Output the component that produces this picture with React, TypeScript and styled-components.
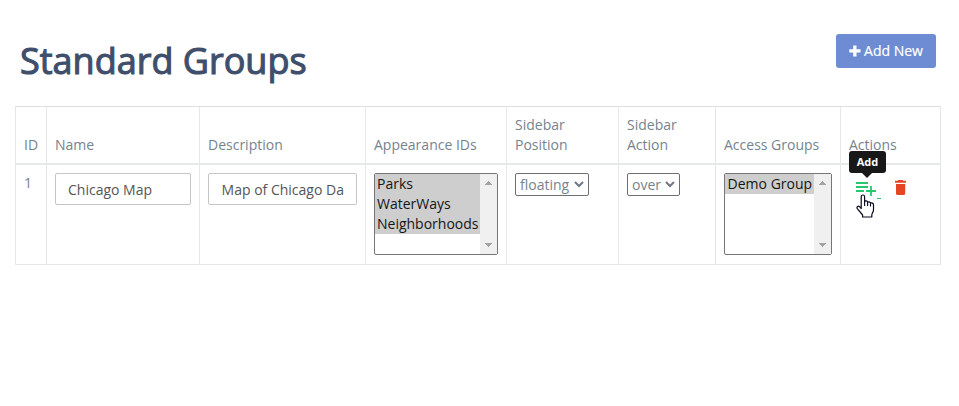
import React from "react";
import styled, { createGlobalStyle } from "styled-components";

const GlobalStyle = createGlobalStyle`
  * { box-sizing: border-box; }
  body {
    margin: 0;
    background: #fff;
    color: #76838f;
    font: 14px/20px "Open Sans", "Noto Sans", sans-serif;
  }
`;

const Page = styled.main`
  width: 959px;
  height: 406px;
  padding: 34px 18px 0 15px;
  overflow: hidden;
`;

const Header = styled.header`
  display: flex;
  justify-content: space-between;
  align-items: flex-start;
  height: 72px;
  padding: 0 5px;
`;

const Title = styled.h1`
  margin: 0;
  color: #3f4f6b;
  font-size: 36px;
  line-height: 54px;
  font-weight: 400;
  -webkit-text-stroke: 1.1px #3f4f6b;
  white-space: nowrap;
`;

const AddButton = styled.button`
  display: flex;
  align-items: center;
  justify-content: center;
  gap: 3px;
  width: 100px;
  height: 34px;
  padding: 0;
  border: 0;
  border-radius: 3px;
  background: #6e8cd3;
  color: #fff;
  font: inherit;
  -webkit-text-stroke: 0.2px #fff;
`;

const Grid = styled.div`
  width: 926px;
  border: 1px solid #e4e6e9;
  border-top-color: #dcdddd;
  border-right: 0;
`;

const Row = styled.div<{ $head?: boolean }>`
  display: grid;
  grid-template-columns: 31px 153px 166px 141px 112px 97px 125px 100px;
  height: ${(p) => (p.$head ? "58px" : "99px")};
  border-bottom: ${(p) => (p.$head ? "2px solid #e6e9eb" : "0")};
`;

const Cell = styled.div<{ $head?: boolean }>`
  display: flex;
  align-items: ${(p) => (p.$head ? "flex-end" : "flex-start")};
  padding: 8px;
  border-right: 1px solid #e6e7e9;
`;

const TextField = styled.input<{ $inset?: number }>`
  width: 100%;
  height: 32px;
  padding: 0 12px 0 ${(p) => p.$inset ?? 12}px;
  border: 1px solid #c6c6c6;
  border-radius: 2px;
  outline: 0;
  color: #555;
  font: inherit;
`;

const ListBox = styled.div`
  display: flex;
  width: 100%;
  height: 82px;
  border: 1px solid #767676;
  border-radius: 2px;
  overflow: hidden;
`;

const Options = styled.div`
  flex: 1;
  min-width: 0;
  color: #151515;
  white-space: nowrap;
`;

const Option = styled.div<{ $inset: number }>`
  height: 20px;
  padding-left: ${(p) => p.$inset}px;
  background: #cecece;
`;

const ScrollTrack = styled.div`
  display: flex;
  flex-direction: column;
  justify-content: space-between;
  align-items: center;
  width: 17px;
  padding: 7px 0;
  background: #f0f0f0;
`;

const SelectBox = styled.div<{ $width: number }>`
  display: flex;
  align-items: center;
  justify-content: space-between;
  width: ${(p) => p.$width}px;
  height: 23px;
  padding: 0 4px;
  border: 1px solid #6f6f6f;
  border-radius: 2px;
`;

const Actions = styled.div`
  position: relative;
  display: flex;
  width: 100%;
`;

const AddAction = styled.svg`
  margin: 9px 0 0 7px;
  flex: none;
`;

const LinkTrace = styled.span`
  width: 4px;
  height: 1px;
  margin: 25px 0 0 1px;
  background: #28c76f;
`;

const TrashIcon = styled.svg`
  margin: 7px 0 0 14px;
  flex: none;
`;

const Tooltip = styled.div`
  position: absolute;
  top: -22px;
  left: 0;
  width: 37px;
  height: 22px;
  border-radius: 3px;
  background: #181818;
  color: #fff;
  font-size: 11px;
  font-weight: 700;
  line-height: 21px;
  text-align: center;
  &::after {
    content: "";
    position: absolute;
    top: 22px;
    left: 13px;
    border: 5px solid transparent;
    border-top-color: #181818;
    border-bottom: 0;
  }
`;

const Pointer = styled.svg`
  position: absolute;
  left: 7px;
  top: 21px;
`;

function Scroll() {
  return (
    <ScrollTrack>
      <svg width="7" height="4" shapeRendering="crispEdges">
        <path d="M3 0h1v1h1v1h1v1h1v1H0V3h1V2h1V1h1z" fill="#a3a3a3" />
      </svg>
      <svg width="7" height="4" shapeRendering="crispEdges">
        <path d="M0 0h7v1H6v1H5v1H4v1H3V3H2V2H1V1H0z" fill="#a3a3a3" />
      </svg>
    </ScrollTrack>
  );
}

function MultiSelect({ items, inset = 2 }: { items: string[]; inset?: number }) {
  return (
    <ListBox>
      <Options>
        {items.map((item) => (
          <Option key={item} $inset={inset}>{item}</Option>
        ))}
      </Options>
      <Scroll />
    </ListBox>
  );
}

function Select({ value, width }: { value: string; width: number }) {
  return (
    <SelectBox $width={width}>
      {value}
      <svg width="10" height="7" viewBox="0 0 10 7">
        <path d="M1 1l4 4 4-4" fill="none" stroke="#707784" strokeWidth="2" />
      </svg>
    </SelectBox>
  );
}

const headings = [
  "ID",
  "Name",
  "Description",
  "Appearance IDs",
  "Sidebar Position",
  "Sidebar Action",
  "Access Groups",
  "Actions",
];

export default function App() {
  return (
    <>
      <GlobalStyle />
      <Page>
        <Header>
          <Title>Standard Groups</Title>
          <AddButton>
            <svg width="12" height="12" viewBox="0 0 12 12">
              <path d="M4.2 0.5h3.3v3.8h4v3.2h-4v4H4.2v-4H.3V4.3h3.9z" fill="#fff" />
            </svg>
            Add New
          </AddButton>
        </Header>
        <Grid>
          <Row $head>
            {headings.map((h) => (
              <Cell $head key={h}>{h}</Cell>
            ))}
          </Row>
          <Row>
            <Cell>1</Cell>
            <Cell><TextField defaultValue="Chicago Map" /></Cell>
            <Cell><TextField $inset={12.6} defaultValue="Map of Chicago Data" /></Cell>
            <Cell><MultiSelect items={["Parks", "WaterWays", "Neighborhoods"]} /></Cell>
            <Cell><Select value="floating" width={74} /></Cell>
            <Cell><Select value="over" width={53} /></Cell>
            <Cell><MultiSelect items={["Demo Group"]} inset={2.6} /></Cell>
            <Cell>
              <Actions>
                <AddAction width="20" height="14" viewBox="0 0 20 14">
                  <path
                    d="M0 1h12M0 5h12M0 9h8M15 4v10M10 9h10"
                    fill="none"
                    stroke="#28c76f"
                    strokeWidth="1.8"
                  />
                </AddAction>
                <LinkTrace />
                <TrashIcon width="12" height="15" viewBox="0 0 12 15">
                  <path
                    d="M3.5 0h4l.8.8H11v1.9H0V.8h2.7zM1 4h9.2v9.2c0 1-.7 1.8-1.7 1.8h-6C1.6 15 1 14.2 1 13.2z"
                    fill="#e64524"
                  />
                </TrashIcon>
                <Tooltip>Add</Tooltip>
                <Pointer width="19" height="24" viewBox="0 0 19 24">
                  <path
                    d="M5.2 14.5V2.7c0-2.3 3.4-2.3 3.4 0v5.2c.5-1.5 2.8-1.2 3 .5.7-1 2.7-.7 2.9.9 1-.8 3-.2 3 1.5v5.1c0 2-1.7 3.5-1.7 5.1v2H6.6v-2L1.3 14.6c-1-1.7 1-3.2 2.3-1.9z"
                    fill="#fff"
                    stroke="#080b1a"
                    strokeWidth="1.2"
                    strokeLinejoin="round"
                  />
                  <path d="M8.6 8v4M11.6 8.6V12M14.5 9.5v3" stroke="#080b1a" strokeWidth="1.1" />
                </Pointer>
              </Actions>
            </Cell>
          </Row>
        </Grid>
      </Page>
    </>
  );
}
